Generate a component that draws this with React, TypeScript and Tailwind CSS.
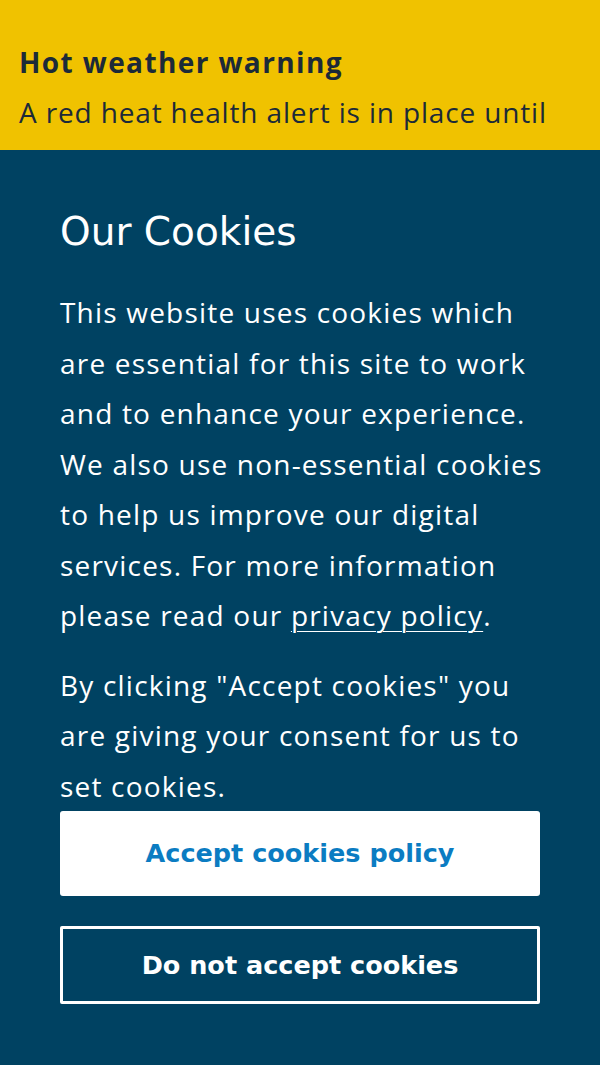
import React from 'react';

const bodyFont = { fontFamily: '"Open Sans", "Noto Sans", sans-serif' };
const headFont = { fontFamily: '"DejaVu Sans", "Open Sans", sans-serif' };

const introLines = [
  'This website uses cookies which',
  'are essential for this site to work',
  'and to enhance your experience.',
  'We also use non-essential cookies',
  'to help us improve our digital',
  'services. For more information',
];

const consentLines = [
  'By clicking "Accept cookies" you',
  'are giving your consent for us to',
  'set cookies.',
];

const AlertBanner = () => (
  <div className="h-[150px] overflow-hidden bg-[#f0c200] px-[19px] pt-[38px] text-[#1c2a38]" style={bodyFont}>
    <p className="text-[28px] font-bold leading-[49px] tracking-[1.4px]">Hot weather warning</p>
    <p className="whitespace-nowrap text-[28px] leading-[50px] tracking-[0.85px]">A red heat health alert is in place until</p>
  </div>
);

const CookiePanel = () => (
  <div className="min-h-[915px] bg-[#004262] px-[60px] pt-[59px] text-white">
    <h2 className="text-[39px] leading-[46px]" style={headFont}>Our Cookies</h2>
    <div className="text-[28px] leading-[50.5px] tracking-[1.2px]" style={bodyFont}>
      <p className="mt-[32px]">
        {introLines.map((line) => (
          <span key={line} className="block whitespace-nowrap">{line}</span>
        ))}
        <span className="block whitespace-nowrap">
          please read our <a href="#" className="underline decoration-1 underline-offset-[5px]">privacy policy</a>.
        </span>
      </p>
      <p className="mt-[19px]">
        {consentLines.map((line) => (
          <span key={line} className="block whitespace-nowrap">{line}</span>
        ))}
      </p>
    </div>
    <div className="flex flex-col gap-[30px]" style={headFont}>
      <button className="h-[85px] w-full rounded-[3px] bg-white text-[25.5px] font-bold text-[#0b7cc2]">
        Accept cookies policy
      </button>
      <button className="h-[78px] w-full rounded-[2px] border-[3px] border-white text-[25.5px] font-bold text-white">
        Do not accept cookies
      </button>
    </div>
  </div>
);

export default function App() {
  return (
    <div className="w-[600px]">
      <AlertBanner />
      <CookiePanel />
    </div>
  );
}
